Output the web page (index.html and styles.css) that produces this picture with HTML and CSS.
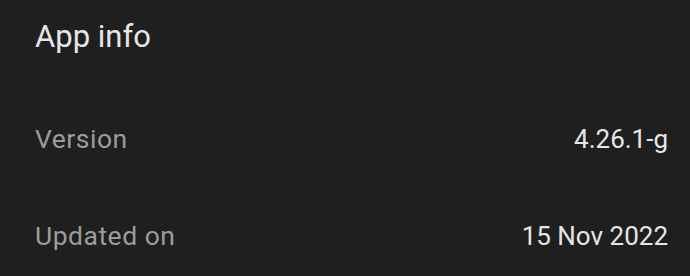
FILE: index.html
```html
<!DOCTYPE html>
<html>
<head>
<meta charset="utf-8">
<link rel="stylesheet" href="styles.css">
</head>
<body>
<div class="panel">
  <h1 class="title">App info</h1>
  <div class="row">
    <span class="label">Version</span>
    <span class="value">4.26.1-g</span>
  </div>
  <div class="row">
    <span class="label">Updated on</span>
    <span class="value">15 Nov 2022</span>
  </div>
</div>
</body>
</html>
```
FILE: styles.css
```css
html, body {
  margin: 0;
  padding: 0;
  background: #1f1f1f;
}
body {
  width: 690px;
  height: 276px;
  overflow: hidden;
  font-family: Roboto, "Liberation Sans", sans-serif;
}
.panel {
  padding: 0 22px 0 35px;
  display: flex;
  flex-direction: column;
}
.title {
  margin: 0;
  font-weight: 400;
  font-size: 31px;
  line-height: 36px;
  color: #e6e6e6;
  padding-top: 19px;
  height: 71px;
}
.row {
  display: flex;
  justify-content: space-between;
  align-items: baseline;
  height: 97px;
  line-height: 97px;
  font-size: 26px;
}
.label {
  color: #9c9c9c;
  font-size: 26.5px;
  letter-spacing: 0.5px;
}
.value {
  color: #e6e6e6;
}
```
